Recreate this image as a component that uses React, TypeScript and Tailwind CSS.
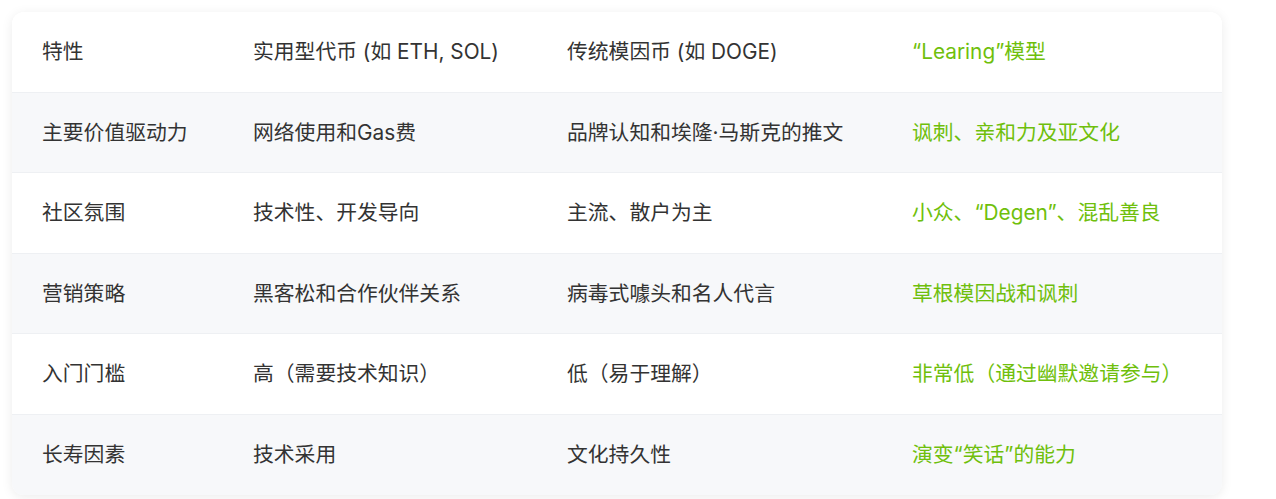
const rows = [
  ["特性", "实用型代币 (如 ETH, SOL)", "传统模因币 (如 DOGE)", "“Learing”模型"],
  ["主要价值驱动力", "网络使用和Gas费", "品牌认知和埃隆·马斯克的推文", "讽刺、亲和力及亚文化"],
  ["社区氛围", "技术性、开发导向", "主流、散户为主", "小众、“Degen”、混乱善良"],
  ["营销策略", "黑客松和合作伙伴关系", "病毒式噱头和名人代言", "草根模因战和讽刺"],
  ["入门门槛", "高（需要技术知识）", "低（易于理解）", "非常低（通过幽默邀请参与）"],
  ["长寿因素", "技术采用", "文化持久性", "演变“笑话”的能力"],
];

export default function App() {
  return (
    <div className="bg-white min-h-[499px] p-3 font-['Inter','Noto_Sans_CJK_SC',sans-serif]">
      <div className="w-[1210px] rounded-xl bg-white shadow-[0_2px_12px_rgba(0,0,0,0.08)] overflow-hidden">
        {rows.map((row, i) => (
          <div
            key={i}
            className={`grid grid-cols-[211px_314px_345px_1fr] h-[80.5px] items-center pl-[30px] text-[20.8px] text-[#333] ${
              i % 2 === 1 ? "bg-[#f7f8fa]" : "bg-white"
            } ${i < rows.length - 1 ? "border-b border-[#eef0f3]" : ""}`}
          >
            <div>{row[0]}</div>
            <div>{row[1]}</div>
            <div>{row[2]}</div>
            <div className="text-[#6fbf0c]">{row[3]}</div>
          </div>
        ))}
      </div>
    </div>
  );
}
